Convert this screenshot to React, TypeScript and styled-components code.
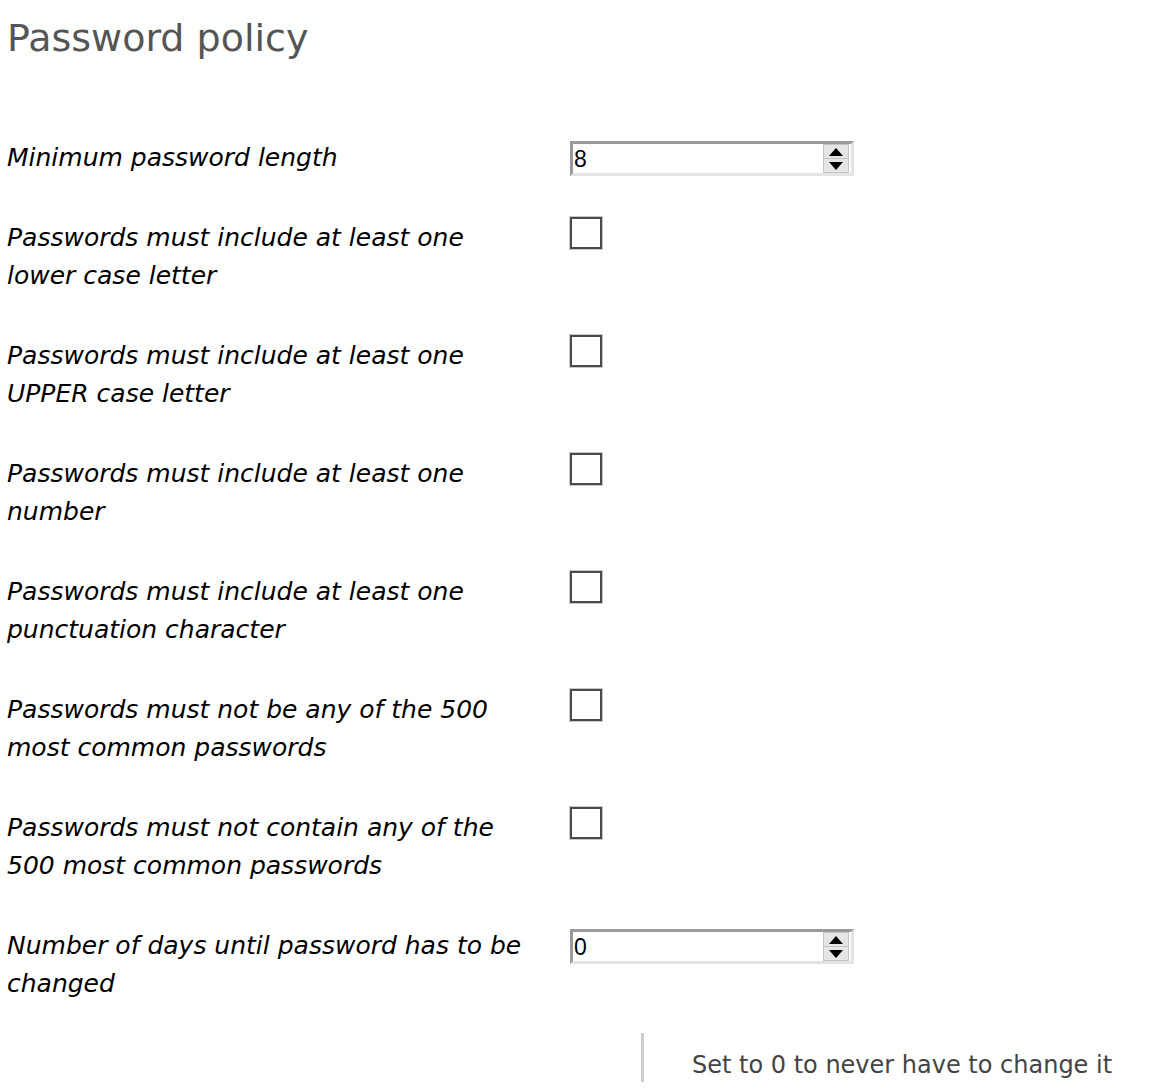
import React from "react";
import styled, { createGlobalStyle } from "styled-components";

const Global = createGlobalStyle`
  html, body { margin: 0; padding: 0; background: #fff; }
  body { font-family: "DejaVu Sans", Verdana, sans-serif; }
`;

const Page = styled.div`
  padding: 13px 0 0 7px;
  width: 1154px;
`;

const Title = styled.h1`
  margin: 0;
  font-family: "DejaVu Sans", Verdana, sans-serif;
  font-weight: normal;
  font-size: 38px;
  line-height: 50px;
  color: #555;
`;

const Form = styled.div`
  margin-top: 76px;
  display: flex;
  flex-direction: column;
  gap: 42px;
`;

const Row = styled.div`
  display: grid;
  grid-template-columns: 563px 1fr;
  align-items: start;
`;

const Label = styled.label`
  font-family: "DejaVu Sans", Verdana, sans-serif;
  font-style: italic;
  font-size: 25px;
  line-height: 38px;
  color: #000;
  white-space: nowrap;
`;

const CheckBox = styled.span`
  display: block;
  width: 28px;
  height: 28px;
  margin-top: -2px;
  border: 2px solid #4a4a4a;
  box-shadow: 0 0 0 1px #c8c8c8;
  background: #fff;
`;

const Spin = styled.div`
  display: flex;
  width: 278px;
  height: 29px;
  margin-top: 2px;
  border-top: 3px solid #9a9a9a;
  border-left: 3px solid #9a9a9a;
  border-bottom: 3px solid #e3e3e3;
  border-right: 3px solid #e3e3e3;
  background: #fff;
`;

const SpinValue = styled.span`
  flex: 1;
  font-family: "Liberation Sans", Arial, sans-serif;
  font-size: 23px;
  line-height: 30px;
  color: #000;
  padding-left: 1px;
`;

const Arrows = styled.div`
  width: 24px;
  margin: 0 2px 0 0;
  display: flex;
  flex-direction: column;
  background: #e6e6e6;
  border: 1px solid #c4c4c4;
`;

const ArrowBtn = styled.div<{ $down?: boolean }>`
  flex: 1;
  display: flex;
  align-items: center;
  justify-content: center;
  border-top: ${(p) => (p.$down ? "1px solid #c4c4c4" : "none")};
`;

const Help = styled.div`
  display: grid;
  grid-template-columns: 634px 1fr;
  margin-top: 30px;
`;

const HelpBox = styled.div`
  border-left: 3px solid #cccccc;
  height: 49px;
  padding-left: 48px;
  display: flex;
  align-items: flex-end;
  font-family: "DejaVu Sans", Verdana, sans-serif;
  font-size: 24px;
  line-height: 34px;
  color: #444;
`;

const Tri = ({ down }: { down?: boolean }) => (
  <svg width="14" height="8" viewBox="0 0 14 8">
    <polygon points={down ? "0,0 14,0 7,8" : "0,8 14,8 7,0"} fill="#000" />
  </svg>
);

const NumberField = ({ value }: { value: string }) => (
  <Spin>
    <SpinValue>{value}</SpinValue>
    <Arrows>
      <ArrowBtn>
        <Tri />
      </ArrowBtn>
      <ArrowBtn $down>
        <Tri down />
      </ArrowBtn>
    </Arrows>
  </Spin>
);

type RowDef = { lines: string[]; kind: "num" | "check"; value?: string };

const rows: RowDef[] = [
  { lines: ["Minimum password length"], kind: "num", value: "8" },
  { lines: ["Passwords must include at least one", "lower case letter"], kind: "check" },
  { lines: ["Passwords must include at least one", "UPPER case letter"], kind: "check" },
  { lines: ["Passwords must include at least one", "number"], kind: "check" },
  { lines: ["Passwords must include at least one", "punctuation character"], kind: "check" },
  { lines: ["Passwords must not be any of the 500", "most common passwords"], kind: "check" },
  { lines: ["Passwords must not contain any of the", "500 most common passwords"], kind: "check" },
  { lines: ["Number of days until password has to be", "changed"], kind: "num", value: "0" },
];

export default function App() {
  return (
    <>
      <Global />
      <Page>
        <Title>Password policy</Title>
        <Form>
          {rows.map((r) => (
            <Row key={r.lines.join(" ")}>
              <Label>
                {r.lines.map((l, i) => (
                  <React.Fragment key={i}>
                    {i > 0 && <br />}
                    {l}
                  </React.Fragment>
                ))}
              </Label>
              {r.kind === "num" ? <NumberField value={r.value!} /> : <CheckBox />}
            </Row>
          ))}
        </Form>
        <Help>
          <span />
          <HelpBox>Set to 0 to never have to change it</HelpBox>
        </Help>
      </Page>
    </>
  );
}
